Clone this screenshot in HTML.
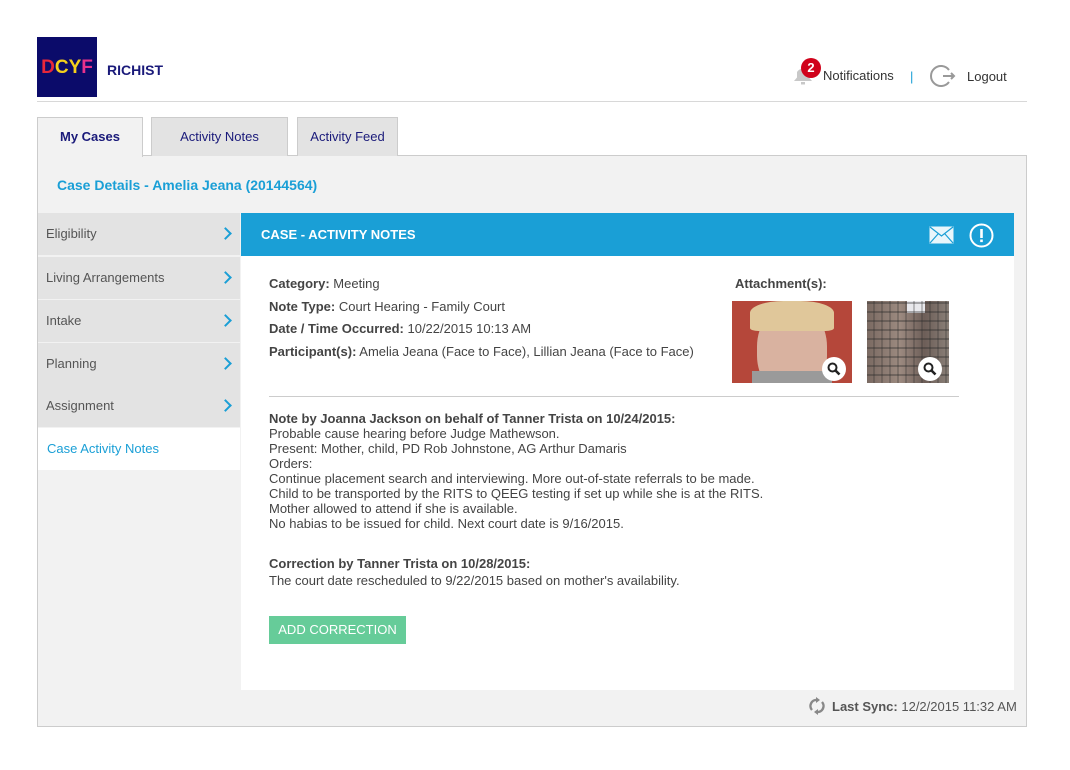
<!DOCTYPE html>
<html><head><meta charset="utf-8">
<style>
*{box-sizing:border-box;margin:0;padding:0}
body{width:1070px;height:770px;background:#fff;font-family:"Liberation Sans",Arial,sans-serif;font-size:13px;color:#444;position:relative;overflow:hidden}
.abs{position:absolute}
.logo{left:37px;top:37px;width:60px;height:60px;background:#0b0b6a;font-weight:bold;font-size:19px;line-height:62px;text-align:center;letter-spacing:0}
.hr{left:37px;top:101px;width:990px;height:1px;background:#d8d8d8}
.tab{top:117px;height:39px;border:1px solid #ccc;border-bottom:none;background:#e3e3e3;color:#1a1a7a;text-align:center;line-height:38px;font-size:13px}
.main{left:37px;top:155px;width:990px;height:572px;background:#f2f2f2;border:1px solid #ccc}
.side{left:38px;width:202px;height:42px;background:#e3e3e3;color:#555;padding-left:8px;line-height:42px}
.chev{position:absolute;right:10px;top:16px;width:9px;height:9px;border-right:2px solid #1a9fd6;border-top:2px solid #1a9fd6;transform:rotate(45deg)}
.line{position:absolute;left:269px;color:#444;white-space:nowrap}
b{color:#444}
</style></head><body>
<div class="abs logo"><span style="color:#e8273a">D</span><span style="color:#f4d01c">C</span><span style="color:#f4d01c">Y</span><span style="color:#e8318c">F</span></div>
<div class="abs" style="left:107px;top:62px;color:#1a1a7a;font-weight:bold;font-size:14px">RICHIST</div>

<svg class="abs" style="left:791px;top:62px" width="24" height="24" viewBox="0 0 24 24"><path d="M3 19 L21 19 L18 15.5 L18 10 A7 7 0 0 0 6 10 L6 15.5 Z" fill="#c8c8c8"/><rect x="10" y="20" width="4" height="2.5" fill="#c8c8c8"/></svg>
<div class="abs" style="left:801px;top:58px;width:20px;height:20px;border-radius:50%;background:#d0021b;color:#fff;font-weight:bold;font-size:13px;text-align:center;line-height:20px">2</div>
<div class="abs" style="left:823px;top:68px;color:#333">Notifications</div>
<div class="abs" style="left:910px;top:69px;color:#1a9fd6">|</div>
<svg class="abs" style="left:929px;top:64px" width="30" height="24" viewBox="0 0 30 24"><path d="M20 6 A10 10 0 1 0 20 18" fill="none" stroke="#999" stroke-width="2"/><path d="M14 12 H25 M22 9 L25 12 L22 15" fill="none" stroke="#999" stroke-width="2"/></svg>
<div class="abs" style="left:967px;top:69px;color:#333">Logout</div>
<div class="abs hr"></div>

<div class="abs main"></div>
<div class="abs tab" style="left:37px;width:106px;background:#f2f2f2;font-weight:bold;height:40px;z-index:2">My Cases</div>
<div class="abs tab" style="left:151px;width:137px">Activity Notes</div>
<div class="abs tab" style="left:297px;width:101px">Activity Feed</div>

<div class="abs" style="left:57px;top:177px;color:#1a9fd6;font-weight:bold;font-size:14px">Case Details - Amelia Jeana (20144564)</div>

<div class="abs side" style="top:213px">Eligibility<i class="chev"></i></div>
<div class="abs side" style="top:257px">Living Arrangements<i class="chev"></i></div>
<div class="abs side" style="top:300px">Intake<i class="chev"></i></div>
<div class="abs side" style="top:343px">Planning<i class="chev"></i></div>
<div class="abs side" style="top:385px">Assignment<i class="chev"></i></div>
<div class="abs side" style="top:428px;background:#fff;color:#1a9fd6;padding-left:9px">Case Activity Notes</div>

<div class="abs" style="left:241px;top:213px;width:773px;height:477px;background:#fff"></div>
<div class="abs" style="left:241px;top:213px;width:773px;height:43px;background:#1a9fd6;color:#fff;font-weight:bold;line-height:43px;padding-left:20px">CASE - ACTIVITY NOTES</div>
<svg class="abs" style="left:929px;top:226px" width="25" height="18" viewBox="0 0 25 18"><rect x="0.5" y="0.5" width="24" height="17" fill="#fff" opacity="0.9"/><path d="M1 1 L12.5 10 L24 1 M1 17 L9 8 M24 17 L16 8" fill="none" stroke="#1a9fd6" stroke-width="1.2"/></svg>
<svg class="abs" style="left:969px;top:223px" width="25" height="25" viewBox="0 0 25 25"><circle cx="12.5" cy="12.5" r="11" fill="none" stroke="#fff" stroke-width="2"/><rect x="11.2" y="6" width="2.6" height="9" fill="#fff"/><rect x="11.2" y="16.5" width="2.6" height="2.6" fill="#fff"/></svg>

<div class="line" style="top:276px"><b>Category:</b> Meeting</div>
<div class="line" style="top:299px"><b>Note Type:</b> Court Hearing - Family Court</div>
<div class="line" style="top:321px"><b>Date / Time Occurred:</b> 10/22/2015 10:13 AM</div>
<div class="line" style="top:344px"><b>Participant(s):</b> Amelia Jeana (Face to Face), Lillian Jeana (Face to Face)</div>
<div class="abs" style="left:735px;top:276px;font-weight:bold">Attachment(s):</div>

<div class="abs" style="left:732px;top:301px;width:120px;height:82px;background:#b5473a;overflow:hidden">
 <div style="position:absolute;left:25px;top:5px;width:70px;height:90px;border-radius:45%;background:#d9b2a0"></div>
 <div style="position:absolute;left:18px;top:0;width:84px;height:30px;border-radius:40% 40% 10% 10%;background:#e0c79a"></div>
 <div style="position:absolute;left:20px;top:70px;width:80px;height:14px;background:#9a9a9a"></div>
</div>
<div class="abs" style="left:867px;top:301px;width:82px;height:82px;background:linear-gradient(90deg,#7a6a62,#9c8a80 40%,#6d5e58 70%,#8a8078);overflow:hidden">
 <div style="position:absolute;left:40px;top:0;width:18px;height:12px;background:#e8e8ec"></div>
 <div style="position:absolute;inset:0;background:repeating-linear-gradient(0deg,transparent 0 7px,rgba(40,40,40,.35) 7px 9px),repeating-linear-gradient(90deg,transparent 0 6px,rgba(40,40,40,.25) 6px 8px)"></div>
</div>
<svg class="abs" style="left:822px;top:357px" width="24" height="24" viewBox="0 0 24 24"><circle cx="12" cy="12" r="12" fill="#fff"/><circle cx="10.5" cy="10.5" r="4" fill="none" stroke="#222" stroke-width="2"/><path d="M13.5 13.5 L17.5 17.5" stroke="#222" stroke-width="2.6"/></svg>
<svg class="abs" style="left:918px;top:357px" width="24" height="24" viewBox="0 0 24 24"><circle cx="12" cy="12" r="12" fill="#fff"/><circle cx="10.5" cy="10.5" r="4" fill="none" stroke="#222" stroke-width="2"/><path d="M13.5 13.5 L17.5 17.5" stroke="#222" stroke-width="2.6"/></svg>

<div class="abs" style="left:269px;top:396px;width:690px;height:1px;background:#ccc"></div>

<div class="abs" style="left:269px;top:411px;line-height:15px;color:#444;white-space:nowrap">
<b>Note by Joanna Jackson on behalf of Tanner Trista on 10/24/2015:</b><br>
Probable cause hearing before Judge Mathewson.<br>
Present: Mother, child, PD Rob Johnstone, AG Arthur Damaris<br>
Orders:<br>
Continue placement search and interviewing. More out-of-state referrals to be made.<br>
Child to be transported by the RITS to QEEG testing if set up while she is at the RITS.<br>
Mother allowed to attend if she is available.<br>
No habias to be issued for child. Next court date is 9/16/2015.
</div>
<div class="abs" style="left:269px;top:555px;line-height:17px;white-space:nowrap">
<b>Correction by Tanner Trista on 10/28/2015:</b><br>
The court date rescheduled to 9/22/2015 based on mother's availability.
</div>

<div class="abs" style="left:269px;top:616px;width:137px;height:28px;background:#66cc99;color:#fff;line-height:28px;text-align:center;font-size:13px">ADD CORRECTION</div>

<svg class="abs" style="left:808px;top:697px" width="18" height="18" viewBox="0 0 18 18"><path d="M4 13 A6 6 0 0 1 9 3" fill="none" stroke="#888" stroke-width="2.4"/><path d="M14 5 A6 6 0 0 1 9 15" fill="none" stroke="#888" stroke-width="2.4"/><path d="M8 0 L12 3 L8 6 Z M10 12 L6 15 L10 18 Z" fill="#888"/></svg>
<div class="abs" style="left:832px;top:699px;color:#555"><b style="color:#555">Last Sync:</b> 12/2/2015 11:32 AM</div>
</body></html>
